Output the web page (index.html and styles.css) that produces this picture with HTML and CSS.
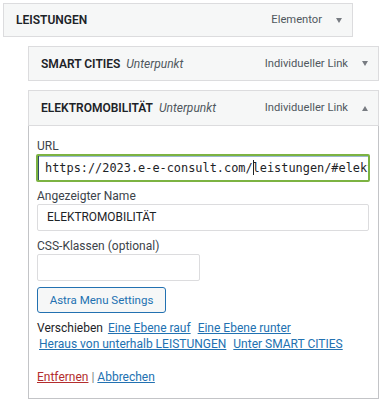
FILE: index.html
```html
<!DOCTYPE html>
<html lang="de">
<head>
<meta charset="utf-8">
<title>Menü</title>
<link rel="stylesheet" href="styles.css">
</head>
<body>
<ul class="menu">
  <li class="item">
    <div class="bar">
      <span class="title">LEISTUNGEN</span>
      <span class="type">Elementor</span>
      <span class="toggle down"></span>
    </div>
  </li>
  <li class="item sub">
    <div class="bar">
      <span class="title">SMART CITIES</span>
      <span class="sublabel">Unterpunkt</span>
      <span class="type">Individueller Link</span>
      <span class="toggle down"></span>
    </div>
  </li>
  <li class="item sub open">
    <div class="bar">
      <span class="title">ELEKTROMOBILITÄT</span>
      <span class="sublabel">Unterpunkt</span>
      <span class="type">Individueller Link</span>
      <span class="toggle up"></span>
    </div>
    <div class="settings">
      <label class="field f-url">
        <span class="label">URL</span>
        <span class="input url focus"><span class="val">https://2023.e-e-consult.com/<span class="caret"></span>leistungen/#elektromobilitaet</span></span>
      </label>
      <label class="field f-name">
        <span class="label">Angezeigter Name</span>
        <span class="input"><span class="val name">ELEKTROMOBILITÄT</span></span>
      </label>
      <label class="field f-css">
        <span class="label">CSS-Klassen (optional)</span>
        <span class="input small"></span>
      </label>
      <button class="button" type="button">Astra Menu Settings</button>
      <div class="move">
        <span>Verschieben</span> <a href="#">Eine Ebene rauf</a> <a href="#">Eine Ebene runter</a> <a href="#">Heraus von unterhalb LEISTUNGEN</a> <a href="#">Unter SMART CITIES</a>
      </div>
      <div class="actions">
        <a href="#" class="delete">Entfernen</a> <span class="sep">|</span> <a href="#">Abbrechen</a>
      </div>
    </div>
  </li>
</ul>
</body>
</html>
```

FILE: styles.css
```css
html, body {
  margin: 0;
  background: #ffffff;
}
body {
  padding: 3px;
  font-family: Roboto, "Liberation Sans", Arial, sans-serif;
  font-size: 12px;
  line-height: 16px;
  color: #1d2327;
}
.menu {
  list-style: none;
  margin: 0;
  padding: 0;
}
.item {
  width: 350px;
  margin-bottom: 9px;
}
.item.sub {
  margin-left: 25px;
  width: 351px;
}
.bar {
  display: flex;
  align-items: center;
  height: 32px;
  border: 1px solid #dcdcde;
  background: #f6f7f7;
  padding: 0 10px 0 12px;
}
.item.sub .bar {
  height: 33px;
}
.item.open .bar {
  height: 34px;
}
.title {
  font-weight: 600;
}
.sublabel {
  font-style: italic;
  color: #50575e;
  margin-left: 6px;
}
.type {
  margin-left: auto;
  color: #50575e;
  font-size: 11.2px;
}
.toggle {
  width: 0;
  height: 0;
  margin-left: 14px;
  border-left: 3px solid transparent;
  border-right: 3px solid transparent;
}
.toggle.down {
  border-top: 5px solid #787c82;
}
.toggle.up {
  border-bottom: 5px solid #787c82;
}
.settings {
  display: flex;
  flex-direction: column;
  align-items: stretch;
  border: 1px solid #c3c4c7;
  border-top: none;
  padding: 12px 9px 13px 8px;
}
.field {
  display: block;
}
.f-url {
  margin-bottom: 6px;
}
.f-name {
  margin-bottom: 7px;
}
.f-css {
  margin-bottom: 6px;
}
.label {
  display: block;
  color: #3c434a;
}
.input {
  display: block;
  box-sizing: border-box;
  height: 27px;
  border: 1px solid #dcdcde;
  border-radius: 2px;
  background: #fff;
  padding: 0 9px;
  overflow: hidden;
  white-space: nowrap;
  line-height: 25px;
}
.input.small {
  width: 163px;
}
.input.url {
  margin: 0 -1px;
  height: 28px;
  border: 2px solid #7cb342;
  box-shadow: inset 1px 0 0 #2c4a66, inset 0 1px 0 #9bb8cf;
  padding: 0 7px;
  line-height: 24px;
}
.val {
  font-size: 11.9px;
  color: #1d2327;
}
.url .val {
  font-family: "DejaVu Sans Mono", "Liberation Mono", monospace;
  font-size: 11.9px;
}
.caret {
  display: inline-block;
  width: 1px;
  height: 15px;
  background: #1d2327;
  vertical-align: -3px;
  margin-right: -1px;
}
.button {
  align-self: flex-start;
  box-sizing: border-box;
  width: 129px;
  height: 26px;
  margin: 0 0 7px 0;
  border: 1px solid #2271b1;
  border-radius: 3px;
  background: #f6f7f7;
  color: #2271b1;
  font-family: inherit;
  font-size: 11.5px;
  padding: 0;
}
.move {
  line-height: 16px;
  color: #1d2327;
}
.move a, .actions a {
  color: #2271b1;
  text-decoration: underline;
}
.move a {
  margin: 0 2px;
  white-space: nowrap;
}
.actions {
  margin-top: 17px;
}
.actions .delete {
  color: #b32d2e;
}
.sep {
  color: #787c82;
}
```
